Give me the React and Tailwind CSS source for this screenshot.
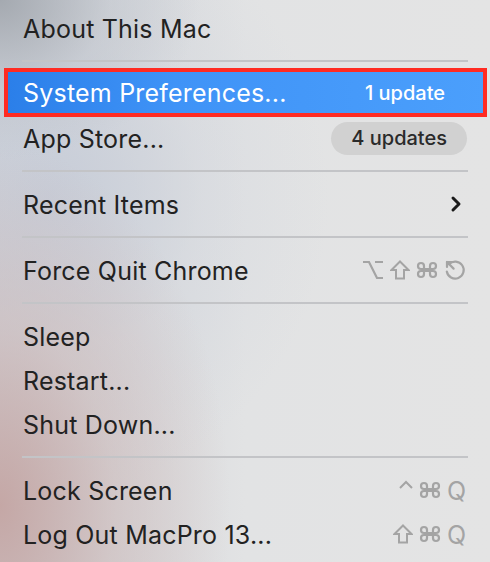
import React from "react";

const font = { fontFamily: '"Inter", "Noto Sans", "DejaVu Sans", sans-serif' };
const G = "#a4a4a4";

function Sep() {
  return (
    <div className="h-[22px] flex items-center px-[22px]">
      <div className="h-[2px] w-full bg-[#c3c4c7]" />
    </div>
  );
}

function Item({ label, right }) {
  return (
    <div className="h-[44px] flex items-center justify-between pl-[23px] pr-[24px]">
      <span className="text-[25px] leading-none tracking-[0.2px] text-[#222222] pt-[2px]">{label}</span>
      {right}
    </div>
  );
}

function Opt() {
  return (
    <svg width="22" height="20" viewBox="0 0 22 20" fill="none" stroke={G} strokeWidth="2.2" strokeLinejoin="miter">
      <path d="M1 2 H7 L15 18 H21 M13 2 H21" />
    </svg>
  );
}

function Shift() {
  return (
    <svg width="20" height="20" viewBox="0 0 20 20" fill="none" stroke={G} strokeWidth="2" strokeLinejoin="miter">
      <path d="M10 1.5 L18.5 10 H14 V18.5 H6 V10 H1.5 Z" />
    </svg>
  );
}

function Cmd() {
  return (
    <svg width="22" height="20" viewBox="0 0 22 20" fill="none" stroke={G} strokeWidth="2.2" strokeLinecap="round" strokeLinejoin="round">
      <path d="M14 6v8a3 3 0 1 0 3-3H5a3 3 0 1 0 3 3V6a3 3 0 1 0-3 3h12a3 3 0 1 0-3-3" />
    </svg>
  );
}

function Ctrl() {
  return (
    <svg width="14" height="20" viewBox="0 0 14 20" fill="none" stroke={G} strokeWidth="2" strokeLinejoin="miter">
      <path d="M1 8 L7 2 L13 8" />
    </svg>
  );
}

function EscGlyph() {
  return (
    <svg width="22" height="22" viewBox="0 0 22 22" fill="none" stroke={G} strokeWidth="2.2" strokeLinecap="round" strokeLinejoin="round">
      <path d="M5 5.2 A8.5 8.5 0 1 1 2.8 12.5" />
      <path d="M3 3 L9.6 9.6" />
      <path d="M3 3 L3 8 M3 3 L8 3" />
    </svg>
  );
}

function Q() {
  return <span className="text-[25px] leading-none text-[#a4a4a4] pt-[2px]" style={font}>Q</span>;
}

function Shortcut({ children, gap = "gap-[6px]" }) {
  return <span className={`flex items-center ${gap}`}>{children}</span>;
}

export default function App() {
  return (
    <div
      className="w-[490px] h-[562px] overflow-hidden pt-[6px] bg-[#e4e4e4] bg-[radial-gradient(ellipse_230px_360px_at_0%_90%,rgba(196,165,163,0.95)_0%,rgba(205,182,180,0.5)_50%,transparent_100%),radial-gradient(ellipse_200px_160px_at_0%_0%,rgba(160,165,172,0.9)_0%,rgba(185,190,198,0.4)_55%,transparent_100%),radial-gradient(ellipse_280px_300px_at_10%_35%,rgba(198,204,216,0.9)_0%,rgba(210,214,222,0.4)_55%,transparent_100%),linear-gradient(90deg,#cdd0d6_0%,#e2e3e4_50%,#e4e4e4_100%)]"
      style={font}
    >
      <Item label="About This Mac" />
      <Sep />
      <div className="relative h-[44px]">
        <div className="absolute left-[4px] right-[3px] -top-[4px] -bottom-[1px] border-[4px] border-[#ff2b22] bg-[linear-gradient(90deg,#2b7fe9_0%,#3f93f7_35%,#4b9ffc_100%)]" />
        <div className="relative h-[41px] flex items-center justify-between pl-[23px] pr-[45px]">
          <span className="text-[25px] leading-none tracking-[0.2px] text-white pt-[2px]">System Preferences...</span>
          <span className="text-[20px] leading-none text-white font-medium pt-[1px]">1 update</span>
        </div>
      </div>
      <Item
        label="App Store..."
        right={
          <span className="-mr-[1px] h-[33px] px-[20px] flex items-center rounded-full bg-[#d1d1d1] text-[20px] leading-none text-[#2a2a2a] font-medium">
            4 updates
          </span>
        }
      />
      <Sep />
      <Item
        label="Recent Items"
        right={
          <svg width="14" height="18" viewBox="0 0 14 18" fill="none" stroke="#1a1a1a" strokeWidth="3" strokeLinecap="round" strokeLinejoin="round" className="mr-[3px]">
            <path d="M4 3 L10 9 L4 15" />
          </svg>
        }
      />
      <Sep />
      <Item
        label="Force Quit Chrome"
        right={
          <Shortcut gap="gap-[6px]">
            <Opt />
            <Shift />
            <Cmd />
            <EscGlyph />
          </Shortcut>
        }
      />
      <Sep />
      <Item label="Sleep" />
      <Item label="Restart..." />
      <Item label="Shut Down..." />
      <Sep />
      <Item
        label="Lock Screen"
        right={
          <Shortcut>
            <Ctrl />
            <Cmd />
            <Q />
          </Shortcut>
        }
      />
      <Item
        label="Log Out MacPro 13..."
        right={
          <Shortcut>
            <Shift />
            <Cmd />
            <Q />
          </Shortcut>
        }
      />
    </div>
  );
}
